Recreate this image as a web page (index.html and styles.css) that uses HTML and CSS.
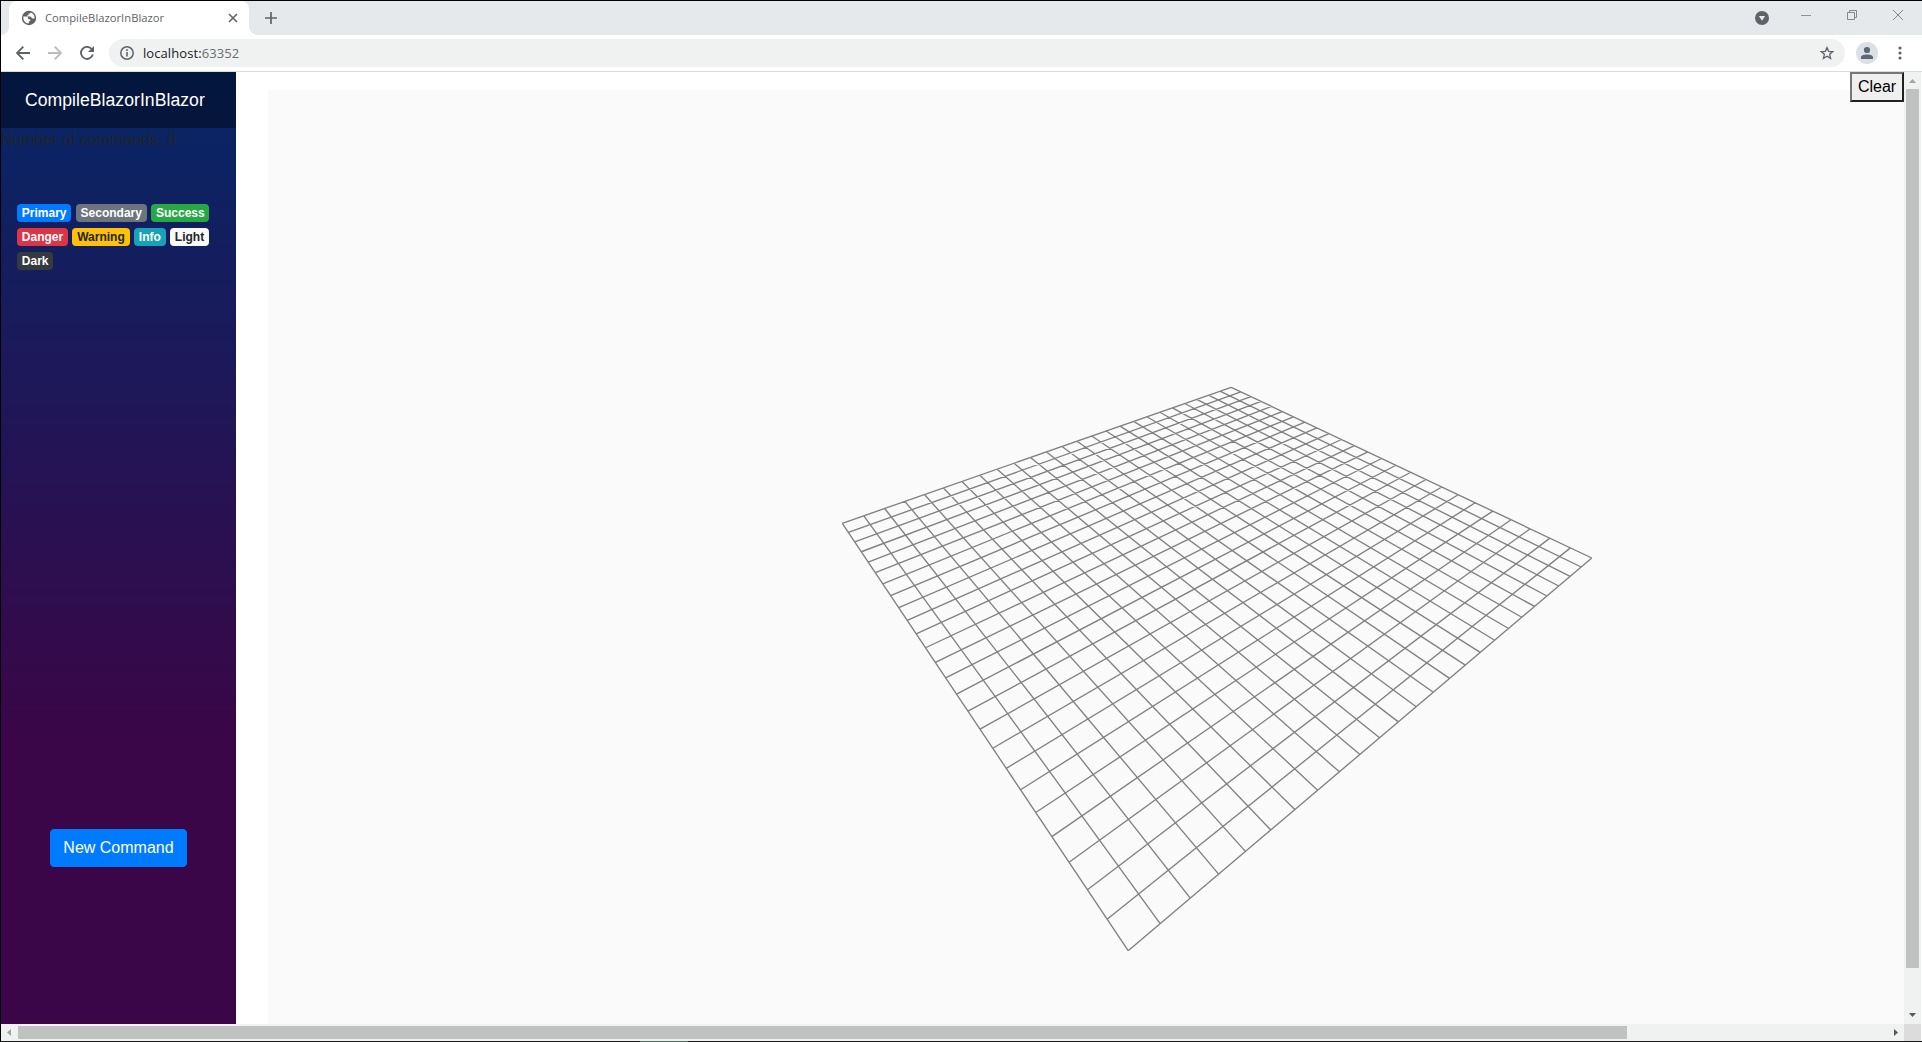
FILE: index.html
```html
<!DOCTYPE html>
<html lang="en">
<head>
<meta charset="utf-8">
<title>CompileBlazorInBlazor</title>
<link rel="stylesheet" href="styles.css">
</head>
<body>
<div class="window">
  <header class="tabstrip">
    <div class="prev-tab"></div>
    <div class="tab">
      <svg class="globe" width="16" height="16" viewBox="0 0 16 16"><circle cx="8" cy="8" r="7.2" fill="#5f6368"/><path d="M2.4 6.6H5.2C7 6.6 7.200 8 7.200 9.200H9.200V11.200H7.800V13.600C4.400 13.600 1.800 10.600 2.400 6.600ZM9.400 2.400V3.600H7.600V5.200H6.200V6.600H9.200C10.400 6.600 10.400 8.600 11.800 8.600H13.500C14 5.400 12 3 9.400 2.400Z" fill="#fff"/></svg>
      <span class="tab-title">CompileBlazorInBlazor</span>
      <svg class="tab-close" width="10" height="10" viewBox="0 0 10 10"><path d="M1 1 9 9M9 1 1 9" stroke="#5f6368" stroke-width="1.6"/></svg>
    </div>
    <svg class="new-tab" width="12" height="12" viewBox="0 0 12 12"><path d="M6 0V12M0 6H12" stroke="#5f6368" stroke-width="1.7"/></svg>
    <div class="window-controls">
      <svg width="14" height="14" viewBox="0 0 14 14"><circle cx="7" cy="7" r="7" fill="#5f6368"/><path d="M3.8 5H10.2L7 9.8Z" fill="#e5e9ec"/></svg>
      <svg class="minimize" width="10" height="10" viewBox="0 0 10 10"><path d="M0 5.5H10" stroke="#909396"/></svg>
      <svg class="restore" width="10" height="10" viewBox="0 0 10 10"><path d="M.5 2.5H7.5V9.5H.5ZM2.5 2.5V.5H9.5V7.5H7.5" fill="none" stroke="#85888b"/></svg>
      <svg class="close" width="10" height="10" viewBox="0 0 10 10"><path d="M0 0 10 10M10 0 0 10" stroke="#85888b"/></svg>
    </div>
  </header>
  <nav class="toolbar">
    <svg width="14" height="14" viewBox="0 0 14 14"><path d="M14 7H1.3M7.3.7 1 7 7.3 13.3" fill="none" stroke="#5f6368" stroke-width="1.9"/></svg>
    <svg width="14" height="14" viewBox="0 0 14 14"><path d="M0 7H12.7M6.7.7 13 7 6.7 13.3" fill="none" stroke="#b9bbbd" stroke-width="1.9"/></svg>
    <svg width="14" height="14" viewBox="0 0 14 14"><path d="M12.8 8.6A6 6 0 1 1 11.6 3" fill="none" stroke="#5f6368" stroke-width="1.9"/><path d="M14 0V6H8Z" fill="#5f6368"/></svg>
    <div class="address">
      <svg width="14" height="14" viewBox="0 0 14 14"><circle cx="7" cy="7" r="6.2" fill="none" stroke="#5f6368" stroke-width="1.5"/><path d="M7 6V10.5M7 3.3V5" stroke="#5f6368" stroke-width="1.6"/></svg>
      <span class="url">localhost:<span class="port">63352</span></span>
      <svg class="star" width="14" height="14" viewBox="0 0 14 14"><path d="M7 1.5 8.6 5.3 12.8 5.6 9.6 8.3 10.6 12.4 7 10.2 3.4 12.4 4.4 8.3 1.2 5.6 5.4 5.3Z" fill="none" stroke="#5f6368" stroke-width="1.3"/></svg>
    </div>
    <svg class="avatar" width="22" height="22" viewBox="0 0 22 22"><circle cx="11" cy="11" r="11" fill="#dcdfe3"/><circle cx="11" cy="8" r="3.1" fill="#5f6673"/><path d="M5 17V15.2C5 13 8.5 12.4 11 12.4S17 13 17 15.2V17Z" fill="#5f6673"/></svg>
    <svg class="menu" width="4" height="14" viewBox="0 0 4 14"><g fill="#5f6368"><circle cx="2" cy="2" r="1.6"/><circle cx="2" cy="7" r="1.6"/><circle cx="2" cy="12" r="1.6"/></g></svg>
  </nav>
  <div class="viewport">
    <div class="page">
      <aside class="sidebar">
        <div class="brand">CompileBlazorInBlazor</div>
        <div class="count">Number of commands: 0</div>
        <div class="badges">
          <span class="badge primary">Primary</span>
          <span class="badge secondary">Secondary</span>
          <span class="badge success">Success</span>
          <span class="badge danger">Danger</span>
          <span class="badge warning">Warning</span>
          <span class="badge info">Info</span>
          <span class="badge light">Light</span>
          <span class="badge dark">Dark</span>
        </div>
        <button class="btn">New Command</button>
      </aside>
      <main class="main">
        <svg class="scene" id="scene" width="1636" height="934" viewBox="268 90 1636 934"></svg>
        <button class="clear">Clear</button>
      </main>
    </div>
    <div class="vscroll">
      <svg width="17" height="17" viewBox="0 0 17 17"><path d="M5 11H12L8.500 7Z" fill="#a3a5a5"/></svg>
      <div class="vthumb"></div>
      <svg width="17" height="17" viewBox="0 0 17 17"><path d="M5 6H12L8.500 10Z" fill="#505a56"/></svg>
    </div>
    <div class="hscroll">
      <svg width="17" height="17" viewBox="0 0 17 17"><path d="M10 5V12L6 8.500Z" fill="#a3a5a5"/></svg>
      <div class="hthumb"></div>
      <svg width="17" height="17" viewBox="0 0 17 17"><path d="M7 5V12L11 8.500Z" fill="#505a56"/></svg>
    </div>
    <div class="corner"></div>
  </div>
  <footer class="edge"><div class="edge-mark"></div></footer>
</div>
<script src="scene.js"></script>
</body>
</html>
```

FILE: styles.css
```css
* { box-sizing: border-box; }
body { margin: 0; overflow: hidden; font-family: "Liberation Sans", Arial, sans-serif; font-size: 16px; line-height: 24px; color: #212529; }
svg { display: block; flex: none; }
.window { width: 1922px; height: 1042px; display: flex; flex-direction: column; border-top: 1px solid #000; border-left: 1px solid #000; background: #fff; }
.tabstrip { height: 34px; flex: none; display: flex; background: #e5e9ec; }
.prev-tab { width: 8px; background: #fff; }
.prev-tab::before { content: ""; display: block; width: 8px; height: 34px; background: #e5e9ec; border-bottom-right-radius: 8px; }
.tab { width: 240px; height: 34px; display: flex; align-items: center; padding: 0 11px 0 12px; background: #fff; border-radius: 8px 8px 0 0; position: relative; }
.tab::after { content: ""; position: absolute; left: 240px; bottom: 0; width: 8px; height: 8px; background: radial-gradient(circle at 8px 0, transparent 7.5px, #fff 8px); }
.tab-title { margin-left: 8px; font: 11.2px/16px "Open Sans", sans-serif; letter-spacing: 0.03px; color: #5f6368; flex: 1; white-space: nowrap; }
.new-tab { margin: 11px 0 0 16px; }
.window-controls { margin-left: auto; display: flex; padding-right: 19px; padding-top: 9px; }
.window-controls > svg:first-child { margin-top: 1px; }
.minimize { margin-left: 32px; }
.restore { margin-left: 36px; }
.close { margin-left: 36px; }
.toolbar { height: 37px; flex: none; display: flex; align-items: center; gap: 18px; padding: 0 20px 0 15px; border-bottom: 1px solid #d9dbdb; }
.address { flex: 1; height: 28px; margin-left: -3px; display: flex; align-items: center; padding: 0 11px; border-radius: 14px; background: #f0f2f2; }
.url { margin-left: 9px; font: 13px/18px "Open Sans", sans-serif; letter-spacing: 0.08px; color: #202124; }
.port { color: #696d71; }
.star { margin-left: auto; }
.avatar { margin: 0 2px 0 -7px; }
.viewport { flex: 1; min-height: 0; display: grid; grid-template: 952px 17px / 1903px 17px; }
.page { display: flex; overflow: hidden; }
.sidebar { width: 235px; display: flex; flex-direction: column; background: linear-gradient(180deg, #052767 0%, #3a0647 70%); }
.brand { height: 56px; padding: 16px 0 0 24px; font-size: 17.6px; line-height: 24px; letter-spacing: 0.04px; color: #fff; background: rgba(0, 0, 0, .4); }
.count { white-space: nowrap; }
.badges { margin-top: 48px; padding-left: 16px; width: 220px; font-size: 16px; line-height: 24px; }
.badge { display: inline-block; padding: 3px 4.8px; border-radius: 4px; font-size: 12px; font-weight: 700; line-height: 12px; vertical-align: baseline; color: #fff; }
.primary { background: #007bff; }
.secondary { background: #6c757d; }
.success { background: #28a745; }
.danger { background: #dc3545; }
.warning { background: #ffc107; color: #212529; }
.info { background: #17a2b8; }
.light { background: #f8f9fa; color: #212529; }
.dark { background: #343a40; }
.btn { margin: auto 0 157px 49px; width: 137px; align-self: flex-start; padding: 6px 12px; border: 1px solid #007bff; border-radius: 4px; background: #007bff; color: #fff; font: 16px/24px "Liberation Sans", Arial, sans-serif; white-space: nowrap; }
.main { flex: 1; padding: 18px 0 0 32px; position: relative; }
.scene { background: #fafafa; }
.clear { position: absolute; top: 0; right: 0; width: 54px; height: 30px; padding: 0; border: 2px solid; border-color: #767676 #212121 #212121 #767676; background: #efefef; color: #000; font: 16px/24px "Liberation Sans", Arial, sans-serif; }
.vscroll { display: flex; flex-direction: column; background: #f0f2f1; }
.vthumb { width: 13px; height: 879px; margin: 0 2px auto; background: #c0c2c1; }
.hscroll { display: flex; background: #f0f2f1; }
.hthumb { width: 1609px; height: 13px; margin: 2px auto 0 0; background: #c0c2c1; }
.corner { background: #dcdcdc; }
.edge { height: 1px; padding-left: 639px; background: #1b1b1b; }
.edge-mark { width: 48px; height: 1px; background: #4a6b5b; }
```

FILE: scene.js
```js
// Ground grid of the 3D view: a 25 x 25 plane projected onto the canvas.
const scene = document.getElementById("scene");
const DIVISIONS = 25;
const corners = [[1231.2, 387.3], [1591.8, 558.0], [1128.2, 950.7], [842.3, 523.3]];

const [[x0, y0], [x1, y1], [x2, y2], [x3, y3]] = corners;
const dx1 = x1 - x2, dx2 = x3 - x2, sx = x0 - x1 + x2 - x3;
const dy1 = y1 - y2, dy2 = y3 - y2, sy = y0 - y1 + y2 - y3;
const det = dx1 * dy2 - dx2 * dy1;
const g = (sx * dy2 - dx2 * sy) / det;
const h = (dx1 * sy - sx * dy1) / det;

function project(u, v) {
  const w = g * u + h * v + 1;
  return [
    ((x1 - x0 + g * x1) * u + (x3 - x0 + h * x3) * v + x0) / w,
    ((y1 - y0 + g * y1) * u + (y3 - y0 + h * y3) * v + y0) / w
  ];
}

let d = "";
for (let i = 0; i <= DIVISIONS; i++) {
  const t = i / DIVISIONS;
  d += "M" + project(t, 0) + "L" + project(t, 1);
  d += "M" + project(0, t) + "L" + project(1, t);
}
const path = document.createElementNS("http://www.w3.org/2000/svg", "path");
path.setAttribute("d", d);
path.setAttribute("fill", "none");
path.setAttribute("stroke", "#808080");
path.setAttribute("stroke-width", "1.35");
scene.appendChild(path);
```
